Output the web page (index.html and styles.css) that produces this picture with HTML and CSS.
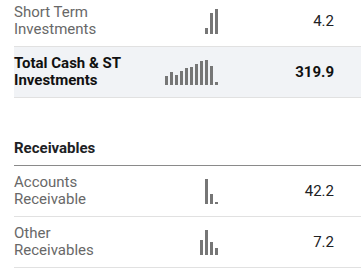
FILE: index.html
```html
<!DOCTYPE html>
<html>
<head>
<meta charset="utf-8">
<link rel="stylesheet" href="styles.css">
</head>
<body>
<div class="table">
  <div class="row">
    <div class="label">Short Term<br>Investments</div>
    <div class="chart">
      <span class="bar" style="height:6px"></span>
      <span class="bar" style="height:21px"></span>
      <span class="bar" style="height:25px"></span>
    </div>
    <div class="value">4.2</div>
  </div>
  <div class="row total">
    <div class="label">Total Cash &amp; ST<br>Investments</div>
    <div class="chart">
      <span class="bar" style="height:9px"></span>
      <span class="bar" style="height:13px"></span>
      <span class="bar" style="height:10px"></span>
      <span class="bar" style="height:14px"></span>
      <span class="bar" style="height:17px"></span>
      <span class="bar" style="height:18px"></span>
      <span class="bar" style="height:21px"></span>
      <span class="bar" style="height:24px"></span>
      <span class="bar" style="height:25px"></span>
      <span class="bar" style="height:19px"></span>
      <span class="bar" style="height:3px"></span>
    </div>
    <div class="value">319.9</div>
  </div>
  <div class="heading">Receivables</div>
  <div class="row">
    <div class="label">Accounts<br>Receivable</div>
    <div class="chart">
      <span class="bar" style="height:25px"></span>
      <span class="bar" style="height:10px"></span>
      <span class="bar" style="height:2px"></span>
    </div>
    <div class="value">42.2</div>
  </div>
  <div class="row">
    <div class="label">Other<br>Receivables</div>
    <div class="chart">
      <span class="bar" style="height:15px"></span>
      <span class="bar" style="height:25px"></span>
      <span class="bar" style="height:13px"></span>
      <span class="bar" style="height:7px"></span>
    </div>
    <div class="value">7.2</div>
  </div>
</div>
</body>
</html>
```

FILE: styles.css
```css
html, body {
  margin: 0;
  padding: 0;
  background: #ffffff;
}
body {
  font-family: Roboto, "Liberation Sans", sans-serif;
  font-size: 15px;
  line-height: 17px;
  color: #202124;
  overflow: hidden;
}
.table {
  margin-top: -4px;
  margin-left: 14px;
}
.row {
  display: grid;
  grid-template-columns: 140px 64px 116px;
  align-items: center;
  padding: 8px 27px 8px 0;
  border-bottom: 1px solid #e1e1e1;
}
.label {
  color: #686868;
}
.chart {
  display: flex;
  justify-content: flex-end;
  align-items: flex-end;
  gap: 2px;
  height: 25px;
}
.bar {
  display: block;
  width: 3px;
  background: #767676;
}
.value {
  text-align: right;
  color: #202124;
}
.total {
  background: #f1f3f6;
}
.total .label,
.total .value {
  color: #111111;
  font-weight: 700;
}
.heading {
  font-weight: 700;
  color: #202124;
  padding: 42px 0 8px 0;
  border-bottom: 1px solid #8a8a8a;
}
```
